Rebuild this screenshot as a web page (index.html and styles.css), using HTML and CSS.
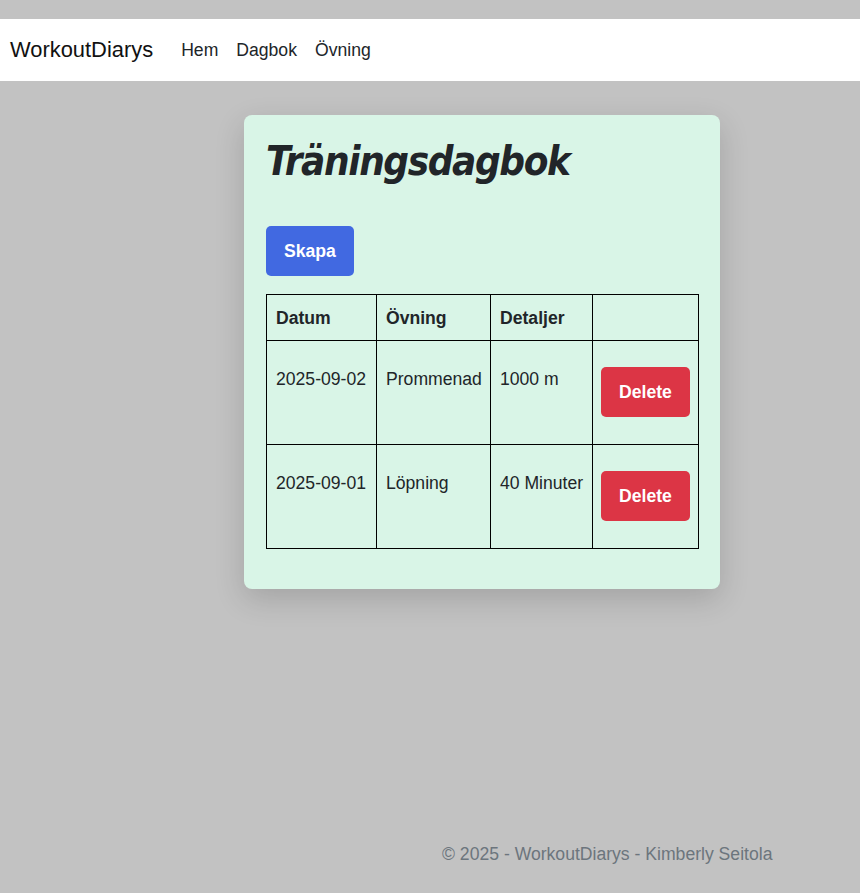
FILE: index.html
```html
<!DOCTYPE html>
<html lang="sv">
<head>
<meta charset="utf-8">
<title>Träningsdagbok - WorkoutDiarys</title>
<link rel="stylesheet" href="styles.css">
</head>
<body>
<header class="topbar">
  <nav class="navbar">
    <a class="brand" href="#">WorkoutDiarys</a>
    <ul class="nav-links">
      <li><a href="#">Hem</a></li>
      <li><a href="#">Dagbok</a></li>
      <li><a href="#">Övning</a></li>
    </ul>
  </nav>
</header>
<main class="main">
  <section class="card">
    <h1 class="title">Träningsdagbok</h1>
    <a class="btn btn-primary" href="#">Skapa</a>
    <table class="diary">
      <colgroup>
        <col class="col-date"><col class="col-ex"><col class="col-det"><col class="col-act">
      </colgroup>
      <thead>
        <tr><th>Datum</th><th>Övning</th><th>Detaljer</th><th></th></tr>
      </thead>
      <tbody>
        <tr>
          <td>2025-09-02</td><td>Prommenad</td><td>1000 m</td>
          <td class="cell-action"><button class="btn btn-danger">Delete</button></td>
        </tr>
        <tr>
          <td>2025-09-01</td><td>Löpning</td><td>40 Minuter</td>
          <td class="cell-action"><button class="btn btn-danger">Delete</button></td>
        </tr>
      </tbody>
    </table>
  </section>
</main>
<footer class="footer">© 2025 - WorkoutDiarys - Kimberly Seitola</footer>
</body>
</html>
```
FILE: styles.css
```css
* { box-sizing: border-box; }
html, body { margin: 0; padding: 0; }
body {
  background: #c2c2c2;
  font-family: "Liberation Sans", Arial, sans-serif;
  font-size: 17.6px;
  line-height: 1.5;
  color: #212529;
  min-height: 893px;
  display: flex;
  flex-direction: column;
  padding-top: 19px;
}
a { text-decoration: none; color: inherit; }

.topbar { background: #fff; height: 62px; }
.navbar { height: 100%; display: flex; align-items: center; padding-left: 10px; }
.brand { font-size: 21.9px; color: #111; margin-right: 28px; }
.nav-links { list-style: none; margin: 0; padding: 0; display: flex; gap: 18px; }
.nav-links a { color: #212529; }

.main { padding: 34px 0 0 244px; flex: 1; }
.card {
  width: 476px;
  background: #d9f5e7;
  border-radius: 8px;
  padding: 22px;
  box-shadow: 0 10px 30px rgba(0,0,0,0.16);
}
.title {
  margin: 0 0 41px;
  font-family: "DejaVu Sans Condensed", "DejaVu Sans", sans-serif;
  font-stretch: condensed;
  font-style: italic;
  font-weight: bold;
  font-size: 40px;
  line-height: 48px;
  letter-spacing: -1.4px;
  color: #212529;
}
.btn {
  display: inline-block;
  border: 0;
  border-radius: 5px;
  padding: 12px 18px;
  font-family: "Liberation Sans", Arial, sans-serif;
  font-size: 17.6px;
  font-weight: bold;
  line-height: 26px;
  color: #fff;
  cursor: pointer;
}
.btn-primary { background: #4169e1; }
.btn-danger { background: #dc3545; margin: 26px 0 27px; }

.diary {
  margin: 18px 0;
  width: 432px;
  border-collapse: collapse;
  table-layout: fixed;
}
.col-date { width: 110px; }
.col-ex { width: 114px; }
.col-det { width: 102px; }
.col-act { width: 106px; }
.diary th, .diary td {
  border: 1px solid #000;
  text-align: left;
  vertical-align: top;
  white-space: nowrap;
  padding: 10px 0 9px 9px;
  line-height: 26px;
}
.diary td { padding-top: 25px; padding-bottom: 25px; }
.diary td.cell-action { padding: 0 8px; vertical-align: middle; }

.footer {
  padding: 0 0 26px 442px;
  color: #6c757d;
}
```
